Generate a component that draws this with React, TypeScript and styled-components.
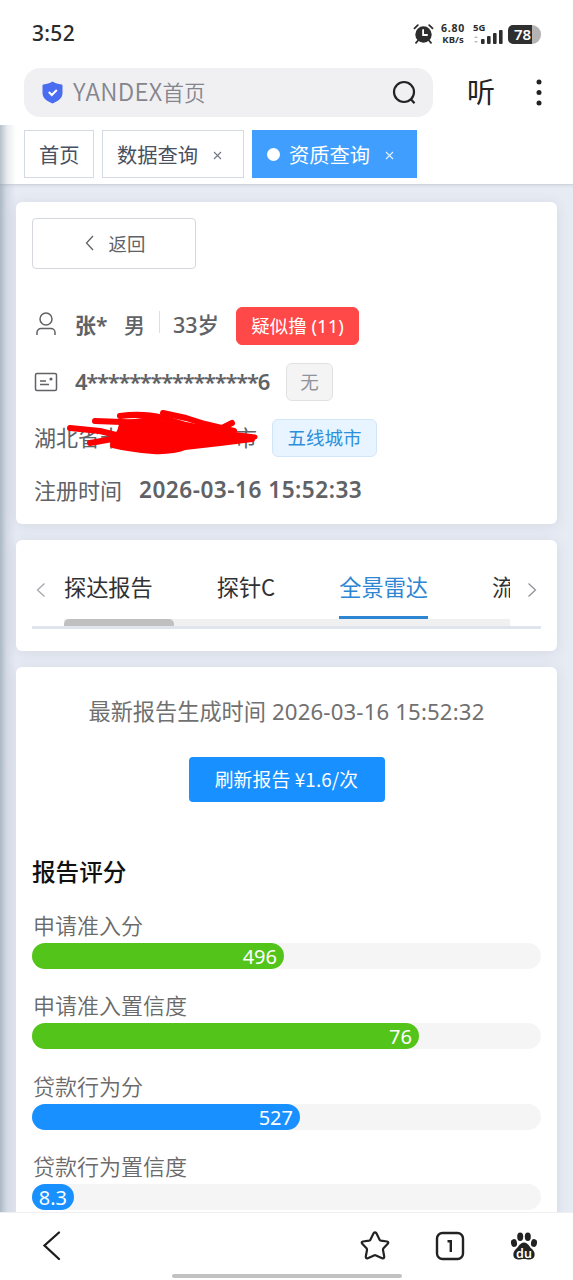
import React from 'react';
import styled, { createGlobalStyle, css } from 'styled-components';

const GlobalStyle = createGlobalStyle`
  * { box-sizing: border-box; }
  html, body { margin: 0; padding: 0; background: #fff; }
  body {
    font-family: "Noto Sans", "Noto Sans CJK SC", sans-serif;
    color: #606266;
    overflow: hidden;
  }
`;

const cjk = css`font-family: "Noto Sans CJK SC", sans-serif;`;

const Screen = styled.div`
  width: 573px;
  height: 1280px;
  display: flex;
  flex-direction: column;
  background: #fff;
  overflow: hidden;
  white-space: nowrap;
`;

const StatusBar = styled.header`
  height: 68px;
  padding: 0 32px;
  display: flex;
  align-items: center;
  justify-content: space-between;
`;

const Clock = styled.span`
  margin-top: -2px;
  font-size: 21px;
  font-weight: 500;
  letter-spacing: 0.3px;
  line-height: 24px;
  color: #2b2b2b;
`;

const StatusIcons = styled.div`
  display: flex;
  align-items: center;
  color: #2d2d2d;
`;

const Speed = styled.div`
  width: 26px;
  margin: 0 7px 0 6px;
  display: flex;
  flex-direction: column;
  align-items: center;
  font-weight: 700;
  font-size: 9.5px;
  line-height: 11px;
`;

const SpeedValue = styled.span`
  font-size: 10.5px;
  letter-spacing: 0.7px;
`;

const Signal = styled.div`
  width: 30px;
  height: 22px;
  margin-right: 5px;
  font-size: 9.5px;
  font-weight: 700;
  line-height: 10px;
  position: relative;
`;

const SignalBars = styled.svg`
  position: absolute;
  left: 0;
  top: 0;
`;

const Battery = styled.div`
  width: 33px;
  height: 19px;
  border-radius: 5px 9px 9px 5px;
  background: linear-gradient(90deg, #2f2f2f 24px, #b4b4b4 24px);
  color: #fff;
  font-size: 15px;
  font-weight: 600;
  line-height: 18px;
  padding-left: 6px;
`;

const AddressBar = styled.div`
  height: 57px;
  padding: 0 24px;
  display: flex;
  align-items: flex-start;
`;

const SearchField = styled.div`
  width: 409px;
  height: 49px;
  border-radius: 16px;
  background: #f0f0f3;
  display: flex;
  align-items: center;
  padding: 0 16px 0 18px;
`;

const SearchText = styled.span`
  ${cjk}
  flex: 1;
  margin: -3px 0 0 10px;
  font-size: 21.5px;
  font-weight: 350;
  line-height: 30px;
  color: #85858d;
`;

const LatinPart = styled.span`
  font-size: 24px;
  letter-spacing: 0.3px;
`;

const Listen = styled.span`
  ${cjk}
  width: 28px;
  margin: -1px 0 0 34px;
  font-size: 28px;
  line-height: 49px;
  color: #222;
`;

const MoreIcon = styled.svg`
  margin: 11px 0 0 40px;
`;

const Page = styled.main`
  flex: 1;
  min-height: 0;
  position: relative;
  background: #e7ebf4;
  overflow: hidden;
`;

const EdgeShade = styled.div`
  position: absolute;
  inset: 0 auto 0 0;
  width: 16px;
  background: linear-gradient(90deg, rgba(130, 150, 165, 0.6), rgba(150, 165, 180, 0.22) 7px, rgba(160, 175, 190, 0) 16px);
`;

const TabBar = styled.nav`
  height: 60px;
  padding: 5px 24px 0;
  display: flex;
  gap: 8px;
  background: #fff;
  border-bottom: 1px solid #cfd6e2;
  box-shadow: 0 1px 3px rgba(0, 0, 0, 0.08);
`;

const PageTab = styled.div<{ $width: number; $active?: boolean }>`
  ${cjk}
  width: ${p => p.$width}px;
  height: 48px;
  padding: 0 14px 1px;
  display: flex;
  align-items: center;
  font-size: 20.3px;
  line-height: 30px;
  border: 1px solid ${p => (p.$active ? '#409eff' : '#d5dae2')};
  background: ${p => (p.$active ? '#409eff' : '#fff')};
  color: ${p => (p.$active ? '#fff' : '#495060')};
`;

const Dot = styled.i`
  width: 13px;
  height: 13px;
  border-radius: 50%;
  background: #fff;
  margin: 2px 9px 0 0;
`;

const CloseIcon = styled.svg`
  margin: 3px 0 0 15px;
`;

const Content = styled.div`
  padding: 17px 16px 0;
  display: flex;
  flex-direction: column;
  gap: 16px;
`;

const Card = styled.section<{ $height: number }>`
  height: ${p => p.$height}px;
  flex: none;
  padding: 16px;
  border-radius: 6px;
  background: #fff;
  box-shadow: 0 2px 14px rgba(60, 70, 90, 0.11);
`;

const BackButton = styled.button`
  ${cjk}
  width: 164px;
  height: 51px;
  padding: 0 0 2px 2px;
  display: flex;
  align-items: center;
  justify-content: center;
  gap: 15px;
  border: 1px solid #d4d7dc;
  border-radius: 4px;
  background: #fff;
  font-size: 18.4px;
  color: #606266;
`;

const InfoRow = styled.div<{ $height?: number }>`
  height: ${p => p.$height ?? 56}px;
  padding-left: 2px;
  display: flex;
  align-items: center;
  font-size: 22px;
  line-height: 32px;
  position: relative;
`;

const Details = styled.div`
  padding-top: 29px;
`;

const RowIcon = styled.svg<{ $lift?: number }>`
  flex: none;
  margin: ${p => -(p.$lift ?? 0)}px 17px 0 0;
`;

const Strong = styled.span<{ $width: number; $spacing?: number; $size?: number }>`
  width: ${p => p.$width}px;
  flex: none;
  margin-top: -3px;
  font-weight: 600;
  font-size: ${p => p.$size ?? 21}px;
  letter-spacing: ${p => p.$spacing ?? 0}px;
`;

const Gender = styled(Strong)`
  font-weight: 500;
`;

const Divider = styled.i`
  width: 1px;
  height: 22px;
  margin: -9px 13px 0 0;
  background: #dcdfe6;
`;

const tones = {
  danger: { bg: '#ff4949', fg: '#fff', line: '#ff4949' },
  info: { bg: '#f4f4f5', fg: '#909399', line: '#e0e1e5' },
  primary: { bg: '#e8f4ff', fg: '#2b8fdc', line: '#d1e6f8' },
};

const Tag = styled.span<{ $tone: keyof typeof tones; $width: number }>`
  width: ${p => p.$width}px;
  height: 38px;
  flex: none;
  display: flex;
  align-items: center;
  justify-content: center;
  border: 1px solid ${p => tones[p.$tone].line};
  border-radius: 6px;
  background: ${p => tones[p.$tone].bg};
  color: ${p => tones[p.$tone].fg};
  font-size: 18.5px;
`;

const Region = styled.span`
  ${cjk}
  width: 238px;
  margin-top: -4px;
  flex: none;
  display: flex;
  justify-content: space-between;
  padding-right: 15px;
`;

const Scribble = styled.svg`
  position: absolute;
  left: 34px;
  top: -4px;
`;

const FieldLabel = styled.span`
  ${cjk}
  width: 105px;
  margin-top: -6px;
`;

const ReportTabs = styled.div`
  height: 73px;
  display: flex;
  align-items: flex-start;
  border-bottom: 3px solid #dfe4ed;
`;

const ArrowIcon = styled.svg<{ $before: number; $after: number }>`
  flex: none;
  margin: 26px ${p => p.$after}px 0 ${p => p.$before}px;
`;

const TabScroller = styled.div`
  width: 446px;
  height: 70px;
  flex: none;
  overflow: hidden;
  display: flex;
  flex-direction: column;
`;

const TabStrip = styled.div`
  height: 63px;
  display: flex;
  gap: 64px;
`;

const ReportTab = styled.span<{ $active?: boolean }>`
  ${cjk}
  flex: none;
  height: 63px;
  font-size: 22.2px;
  line-height: 60px;
  color: ${p => (p.$active ? '#2e86d3' : '#303133')};
  border-bottom: 3px solid ${p => (p.$active ? '#2e86d3' : 'transparent')};
`;

const ScrollTrack = styled.div`
  height: 7px;
  background: #f0f0f0;
`;

const ScrollThumb = styled.div`
  width: 110px;
  height: 7px;
  border-radius: 5px 5px 0 0;
  background: #c0c0c0;
`;

const Generated = styled.div`
  display: flex;
  justify-content: center;
  gap: 6px;
  margin-top: 13px;
  font-size: 22.2px;
  line-height: 32px;
  color: #707070;
`;

const GeneratedTime = styled.span`
  letter-spacing: 0.15px;
`;

const RefreshButton = styled.button`
  ${cjk}
  display: block;
  width: 196px;
  height: 45px;
  margin: 29px auto 0;
  padding: 0 0 2px;
  border: 0;
  border-radius: 4px;
  background: #1890ff;
  color: #fff;
  font-size: 18.8px;
  letter-spacing: 0.15px;
`;

const SectionTitle = styled.h2`
  ${cjk}
  margin: 52px 0 0;
  font-size: 23.6px;
  font-weight: 500;
  line-height: 34px;
  color: #111;
`;

const ScoreList = styled.div`
  padding-top: 21px;
`;

const Score = styled.div`
  height: 80.4px;
`;

const ScoreLabel = styled.div`
  ${cjk}
  height: 34px;
  padding-left: 1px;
  font-size: 22px;
  font-weight: 350;
  line-height: 31px;
  color: #6a6a6a;
`;

const Track = styled.div`
  height: 26px;
  border-radius: 13px;
  background: #f5f5f5;
`;

const Fill = styled.div<{ $color: string }>`
  height: 26px;
  border-radius: 13px;
  padding-right: 7px;
  display: flex;
  justify-content: flex-end;
  background: ${p => p.$color};
  color: #fff;
  font-size: 20px;
  line-height: 28px;
`;

const BottomBar = styled.footer`
  height: 68px;
  border-top: 1px solid #f0f0f4;
  display: flex;
  flex-direction: column;
  align-items: center;
  justify-content: space-between;
`;

const BottomIcons = styled.div`
  width: 100%;
  padding: 17px 35px 0 42px;
  display: flex;
  align-items: flex-start;
`;

const IconGroup = styled.div`
  margin: 1px 0 0 auto;
  display: flex;
  gap: 45px;
`;

const HomeIndicator = styled.div`
  width: 230px;
  height: 4px;
  margin-bottom: 2px;
  border-radius: 2px;
  background: #c1c1c1;
`;

const Close = ({ color }: { color: string }) => (
  <CloseIcon width="9" height="9" viewBox="0 0 9 9" stroke={color} strokeWidth="1.1">
    <path d="M1 1l7 7M8 1L1 8" />
  </CloseIcon>
);

const scores = [
  { label: '申请准入分', value: '496', width: 252, color: '#52c41a' },
  { label: '申请准入置信度', value: '76', width: 387, color: '#52c41a' },
  { label: '贷款行为分', value: '527', width: 268, color: '#1890ff' },
  { label: '贷款行为置信度', value: '8.3', width: 42, color: '#1890ff' },
];

export default function App() {
  return (
    <Screen>
      <GlobalStyle />
      <StatusBar>
        <Clock>3:52</Clock>
        <StatusIcons>
          <svg width="21" height="20" viewBox="0 0 20 20" fill="none" stroke="currentColor" strokeLinecap="round">
            <circle cx="10" cy="10.5" r="8.2" fill="currentColor" stroke="none" />
            <path d="M1 4.3L4.3 1.2M19 4.3l-3.3-3.1M4.5 16.5l-2 2.3M15.5 16.5l2 2.3" strokeWidth="1.8" />
            <path d="M9.6 6v5h4" stroke="#fff" strokeWidth="1.8" />
          </svg>
          <Speed><SpeedValue>6.80</SpeedValue><span>KB/s</span></Speed>
          <Signal>
            5G
            <SignalBars width="30" height="22" viewBox="0 0 30 22" fill="currentColor">
              <path d="M1 15l2-2 2 2zM1 18l2 2 2-2z" fill="#bbb" />
              <rect x="8" y="16" width="3.6" height="5" rx="1" />
              <rect x="14" y="13" width="3.6" height="8" rx="1" />
              <rect x="20" y="10" width="3.6" height="11" rx="1" />
              <rect x="26" y="7" width="3.6" height="14" rx="1" />
            </SignalBars>
          </Signal>
          <Battery>78</Battery>
        </StatusIcons>
      </StatusBar>

      <AddressBar>
        <SearchField>
          <svg width="21" height="23" viewBox="0 0 21 23">
            <path d="M10.5 .6c3 1.8 5.7 2.5 9 2.9.6 0 1 .5 1 1.1v7.4c0 5.2-4.2 8.3-10 10.4C4.7 20.3.5 17.2.5 12V4.600c0-.6.4-1.100 1-1.100 3.300-.4 6-1.100 9-2.900z" fill="#4a6cf0" />
            <path d="M6.8 11l3 3 5-5" fill="none" stroke="#fff" strokeWidth="2" />
          </svg>
          <SearchText><LatinPart>YANDEX</LatinPart>首页</SearchText>
          <svg width="25" height="25" viewBox="0 0 25 25" fill="none" stroke="#222" strokeWidth="2.2">
            <circle cx="12" cy="12" r="10" />
            <path d="M18.7 19l3.8 4.2" />
          </svg>
        </SearchField>
        <Listen>听</Listen>
        <MoreIcon width="8" height="28" viewBox="0 0 8 28" fill="#222">
          <circle cx="4" cy="3" r="2.5" /><circle cx="4" cy="13.5" r="2.5" /><circle cx="4" cy="24" r="2.5" />
        </MoreIcon>
      </AddressBar>

      <Page>
        <TabBar>
          <PageTab $width={70}>首页</PageTab>
          <PageTab $width={142}>数据查询<Close color="#707684" /></PageTab>
          <PageTab $width={165} $active><Dot />资质查询<Close color="#e6f2ff" /></PageTab>
        </TabBar>
        <Content>
          <Card $height={322}>
            <BackButton>
              <svg width="9" height="16" viewBox="0 0 9 16" fill="none" stroke="#606266" strokeWidth="1.3"><path d="M8 1L1.5 8 8 15" /></svg>
              返回
            </BackButton>
            <Details>
              <InfoRow>
                <RowIcon $lift={5} width="24" height="24" viewBox="0 0 24 24" fill="none" stroke="#606266" strokeWidth="1.5">
                  <circle cx="12" cy="7" r="6" />
                  <path d="M3 23v-2.500a4 4 0 014-4h10a4 4 0 014 4V23" />
                </RowIcon>
                <Strong $width={49}>张*</Strong>
                <Gender $width={35}>男</Gender>
                <Divider />
                <Gender $width={63} $size={21.5}>33岁</Gender>
                <Tag $tone="danger" $width={123}>疑似撸 (11)</Tag>
              </InfoRow>
              <InfoRow>
                <RowIcon width="24" height="20" viewBox="0 0 24 20" fill="none" stroke="#606266" strokeWidth="1.5">
                  <rect x="1.5" y="1.5" width="21" height="17" rx="1.5" />
                  <path d="M6 9h6M6 12.500h9" /><circle cx="17" cy="7" r="1.6" fill="#606266" stroke="none" />
                </RowIcon>
                <Strong $width={211} $size={22} $spacing={-1.3}>4****************6</Strong>
                <Tag $tone="info" $width={47}>无</Tag>
              </InfoRow>
              <InfoRow>
                <Region><span>湖北省十</span><span>市</span></Region>
                <Scribble width="200" height="56" viewBox="66 406 200 56" fill="none" stroke="#fe0000" strokeWidth="6" strokeLinecap="round" strokeLinejoin="round">
                  <path d="M70 428L100 431 120 436" />
                  <path d="M95 421L122 422 150 423" />
                  <path d="M120 416Q143 413 163 418L186 425 222 432" />
                  <path d="M163 413L186 418 205 424 234 431" />
                  <path d="M232 423L218 430" />
                  <path d="M90 443L118 438" />
                  <path d="M113 445Q130 449 153 451Q172 452 185 447L220 443 252 439" />
                  <path d="M120 430l2-7 25-3 30 6 45 7 33 4-35 5-32 4-22 4-28-2-25-5 4-7z" fill="#fe0000" strokeWidth="5" />
                </Scribble>
                <Tag $tone="primary" $width={105}>五线城市</Tag>
              </InfoRow>
              <InfoRow $height={51}>
                <FieldLabel>注册时间</FieldLabel>
                <Strong $width={240} $size={22.6} $spacing={0.5}>2026-03-16 15:52:33</Strong>
              </InfoRow>
            </Details>
          </Card>

          <Card $height={111}>
            <ReportTabs>
              <ArrowIcon $before={4} $after={18} width="10" height="16" viewBox="0 0 10 16" fill="none" stroke="#a5a8ae" strokeWidth="1.3">
                <path d="M8.5 1.5L1.5 8l7 6.500" />
              </ArrowIcon>
              <TabScroller>
                <TabStrip>
                  <ReportTab>探达报告</ReportTab>
                  <ReportTab>探针C</ReportTab>
                  <ReportTab $active>全景雷达</ReportTab>
                  <ReportTab>流</ReportTab>
                </TabStrip>
                <ScrollTrack><ScrollThumb /></ScrollTrack>
              </TabScroller>
              <ArrowIcon $before={17} $after={0} width="10" height="16" viewBox="0 0 10 16" fill="none" stroke="#909399" strokeWidth="1.3">
                <path d="M1.5 1.5l7 6.500-7 6.500" />
              </ArrowIcon>
            </ReportTabs>
          </Card>

          <Card $height={600}>
            <Generated><span>最新报告生成时间</span><GeneratedTime>2026-03-16 15:52:32</GeneratedTime></Generated>
            <RefreshButton>刷新报告 ¥1.6/次</RefreshButton>
            <SectionTitle>报告评分</SectionTitle>
            <ScoreList>
              {scores.map(s => (
                <Score key={s.label}>
                  <ScoreLabel>{s.label}</ScoreLabel>
                  <Track><Fill $color={s.color} style={{ width: s.width }}>{s.value}</Fill></Track>
                </Score>
              ))}
            </ScoreList>
          </Card>
        </Content>
        <EdgeShade />
      </Page>

      <BottomBar>
        <BottomIcons>
          <svg width="20" height="32" viewBox="0 0 20 32" fill="none" stroke="#1d1d1d" strokeWidth="2.3" strokeLinecap="round">
            <path d="M17 2.5L2.5 15.5 17 29" />
          </svg>
          <IconGroup>
            <svg width="30" height="30" viewBox="0 0 30 30" fill="none" stroke="#222" strokeWidth="2.2" strokeLinejoin="round">
              <path d="M13.6 2.3Q15 .5 16.4 2.3L19.5 8.6Q20 9.4 21 9.6L27 10.5Q29.2 11 27.7 12.7L23.5 17.2Q22.9 18 23 19L24.2 25.5Q24.3 27.9 22.2 27.2L16 24.4Q15 24 14 24.4L7.8 27.2Q5.7 27.9 5.8 25.5L7 19Q7.1 18 6.5 17.2L2.3 12.7Q.8 11 3 10.5L9 9.6Q10 9.4 10.5 8.6Z" />
            </svg>
            <svg width="30" height="30" viewBox="0 0 30 30" fill="none" stroke="#222" strokeWidth="2.4">
              <rect x="2" y="2" width="26" height="26" rx="5.5" />
              <path d="M12.5 10.2h3.3V21" />
            </svg>
            <svg width="28" height="30" viewBox="0 0 28 30" fill="#222">
              <ellipse cx="4" cy="12" rx="3" ry="3.9" transform="rotate(-10 4 12)" />
              <ellipse cx="10.2" cy="5.8" rx="3" ry="4.2" />
              <ellipse cx="17.8" cy="5.8" rx="3" ry="4.2" />
              <ellipse cx="24" cy="12" rx="3" ry="3.9" transform="rotate(10 24 12)" />
              <path d="M14 11.5c4 0 5 4 8 6.500 4 3.500 3.500 10-2 10.500-2.500.2-3.500-.5-6-.5s-3.500.7-6 .5c-5.500-.5-6-7-2-10.500 3-2.500 4-6.500 8-6.500z" />
              <text x="14" y="26.5" textAnchor="middle" fontFamily="Noto Sans" fontWeight="600" fontSize="12.5" fill="#fff">du</text>
            </svg>
          </IconGroup>
        </BottomIcons>
        <HomeIndicator />
      </BottomBar>
    </Screen>
  );
}
